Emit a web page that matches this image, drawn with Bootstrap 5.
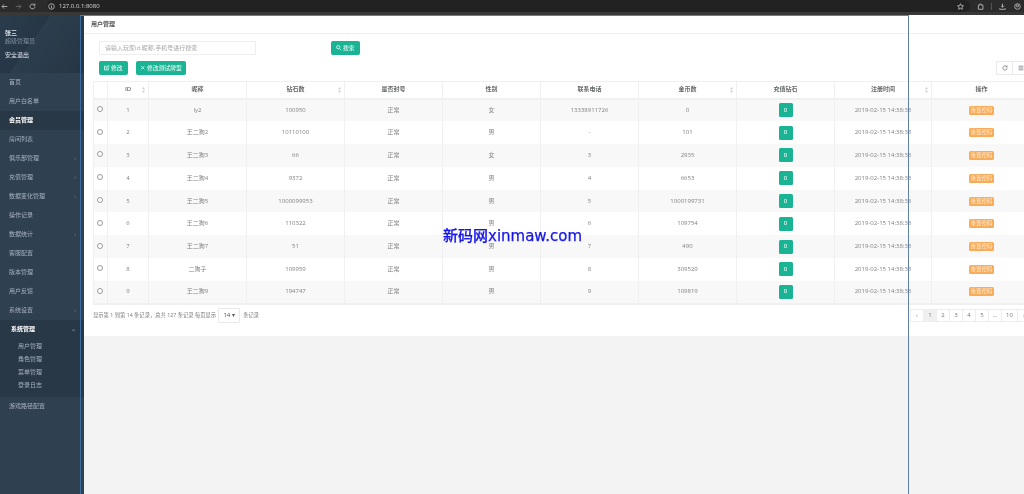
<!DOCTYPE html>
<html lang="zh">
<head>
<meta charset="utf-8">
<title>用户管理</title>
<link href="https://cdn.jsdelivr.net/npm/bootstrap@5.3.0/dist/css/bootstrap.min.css" rel="stylesheet">
<style>
html,body{height:494px;overflow:hidden}
body{width:1024px;font-family:"Open Sans","Liberation Sans","Noto Sans CJK SC",sans-serif;font-size:6px;color:#676a6c;background:#2f4050;position:relative}
.shot-blur{filter:blur(.4px)}
.chrome-bar{height:15px;background:#2b2b2b;border-bottom:3px solid #383838;color:#c4c7c5;flex:none}
.chrome-pill{height:12px;width:923px;margin-left:11px;border-radius:7px;background:#222;font-size:6px;color:#d8d8d8}
.chrome-bar svg{width:7px;height:7px;fill:none;stroke:#bdbdbd;stroke-width:1.200;flex:none}
.nav-back{margin-left:1px}
.nav-gap{margin-left:7px}
.pill-info{margin:0 4px 0 1px}
.pill-star{margin-left:auto;margin-right:6px}
.after-pill{margin-left:7px}
.after-sep{margin-left:8px}
.chrome-sep{width:1px;height:7px;background:#555;margin-left:7px}
.side-col{width:84px;flex:none;background:#2f4050}
.side-head{height:58px;padding:14px 5px 0;background:linear-gradient(125deg,#2b3d4d 0,#263646 40%,#2c3e4e 41%,#263544 100%);color:#dfe4ed;line-height:8px}
.side-head .role{color:#7f8ea3}
.side-head .quit{margin-top:6px;display:block}
.side-item{height:19px;line-height:19px;padding-left:9px;padding-right:8px;color:#a7b1c2;font-size:6px}
.side-item.on{background:#293846;color:#fff;font-weight:600}
.side-arrow{font-size:6px;color:#7c8796}
.side-group{background:#293846;height:77px}
.side-group>.side-item{color:#fff;padding-left:11px;font-weight:600}
.side-subs{padding-top:1px}
.side-sub{height:13px;line-height:13px;padding-left:18px;color:#a7b1c2}
.page-col{flex:1;min-width:0;background:#f3f3f4}
.panel-box{height:321px;background:#fff;overflow:hidden}
.panel-title{height:19px;border-bottom:1px solid #f0f0f0;padding-left:7px;line-height:18px;color:#555;font-weight:600}
.panel-body{padding:7px 0 0 15px}
.search-input{width:157px;height:14px;border:1px solid #eee;padding:0 5px;line-height:12px;color:#a5a5a5;background:#fff}
.mint-btn{background:#1ab394;color:#fff;border:1px solid #1ab394;border-radius:1.5px;height:14px;padding:0 4px;font-size:5.800px;line-height:12px;display:inline-flex;align-items:center;gap:1.5px}
.mint-tight{padding:0 3.500px}
.mint-btn svg{width:5.500px;height:5.500px;fill:none;stroke:#fff;stroke-width:1.400}
.tool-row{margin-top:6px;height:14px}
.tool-group{margin-left:auto;margin-right:-6px;width:34px;flex:none}
.tool-cell{width:17px;height:14px;border:1px solid #e7eaec;display:flex;align-items:center;justify-content:center;margin-right:-1px;flex:none}
.tool-cell svg{width:6px;height:6px;fill:none;stroke:#676a6c;stroke-width:1.200}
.grid-wrap{margin:6px 0 0 -6px;width:938px}
.data-grid{table-layout:fixed;border-collapse:collapse;width:938px;color:#808284}
.data-grid th{height:17px;border:1px solid #f0f0f0;border-bottom-width:2px;text-align:center;font-weight:600;color:#676a6c;padding:0;position:relative;background:#fff}
.data-grid td{height:22.800px;border:1px solid #f0f0f0;border-width:0 1px;text-align:center;padding:0;vertical-align:middle}
.data-grid tr:nth-child(odd) td{background:#f8f8f8}
.data-grid tr:nth-child(even) td{background:#fff}
.data-grid tbody{border-bottom:2px solid #f0f0f0}
.sort-mark{position:absolute;right:3px;top:5px;width:3px;height:6px;fill:#ccc}
.pick{width:6px;height:6px;border:.8px solid #999;border-radius:50%;display:block;margin:-2px 0 0 3px;background:#fff}
.gem-btn{display:inline-flex;width:14px;height:14px;background:#1ab394;color:#d8f5ec;border-radius:1.5px;align-items:center;justify-content:center;font-weight:600}
.reset-tag{display:inline-block;background:#f8ac59;color:#ffe9d0;height:9px;line-height:9px;width:25px;border-radius:1.5px;font-size:5.500px}
.foot-row{height:32px;margin-left:-6px;padding-top:3px;color:#777;font-size:5.300px;width:938px;align-items:flex-start}
.size-pick{height:15px;width:22px;border:1px solid #e7eaec;border-radius:1px;margin:0 3px 0 2px;line-height:13px;text-align:center;font-size:6px;color:#555}
.foot-text{line-height:15px}
.pager{margin-left:auto;height:13px;margin-top:1px;flex:none;width:120px}
.pager span{display:block;height:13px;line-height:11px;width:14px;text-align:center;border:1px solid #eee;margin-left:-1px;color:#777;font-size:6px;flex:none}
.pager span.on{background:#f0f0f0}
.pager span.wide{width:17px}
.window-edge{position:absolute;left:80px;top:15px;width:828.500px;height:479px;border:solid #5f7fa8;border-width:1px 1.500px 0 1px;border-left-color:#3b6a9c;pointer-events:none}
.mark-text{position:absolute;left:443px;top:226px;color:#1616e8;font-family:"DejaVu Sans","Noto Sans CJK SC",sans-serif;font-size:15px;line-height:20px;font-weight:500;white-space:nowrap;-webkit-text-stroke:.25px #1616e8}
</style>
</head>
<body class="d-flex flex-column">
<svg width="0" height="0" class="position-absolute">
  <symbol id="updown" viewBox="0 0 3 6"><path d="M1.5 0 3 2.3H0zM1.5 6 0 3.7h3z"/></symbol>
</svg>
<div class="shot-blur d-flex flex-column flex-grow-1">
<div class="chrome-bar d-flex align-items-center">
  <svg class="nav-back" viewBox="0 0 10 10"><path d="M9 5H1.5M4.5 2 1.5 5l3 3"/></svg>
  <svg class="nav-gap" viewBox="0 0 10 10" style="opacity:.45"><path d="M1 5h7.500M5.500 2l3 3-3 3"/></svg>
  <svg class="nav-gap" viewBox="0 0 10 10"><path d="M8.500 5A3.500 3.500 0 1 1 7.400 2.400M8.500 .8v2.400H6"/></svg>
  <div class="chrome-pill d-flex align-items-center">
    <svg class="pill-info" viewBox="0 0 10 10"><circle cx="5" cy="5" r="4"/><path d="M5 4.500V7.500M5 2.500v1"/></svg>
    <span>127.0.0.1:8080</span>
    <svg class="pill-star" viewBox="0 0 10 10"><path d="m5 1 1.200 2.700 3 .3-2.200 2 .6 3L5 7.500 2.400 9l.6-3L.8 4l3-.3z"/></svg>
  </div>
  <svg class="after-pill" viewBox="0 0 10 10"><path d="M2 3h2V1.500h2V3h2.500v6H2z"/></svg>
  <span class="chrome-sep"></span>
  <svg class="nav-gap" viewBox="0 0 10 10"><path d="M5 1v5M3 4l2 2 2-2M1 7.500v1.500h8V7.500"/></svg>
  <svg class="after-sep" viewBox="0 0 10 10"><circle cx="5" cy="5" r="4"/><circle cx="5" cy="4" r="1.500"/></svg>
</div>
<div class="d-flex flex-grow-1">
  <aside class="side-col">
    <div class="side-head"><div class="fw-semibold">张三</div><div class="role">超级管理员</div><span class="quit">安全退出</span></div>
    <div class="side-item">首页</div>
    <div class="side-item">用户白名单</div>
    <div class="side-item on">会员管理</div>
    <div class="side-item">房间列表</div>
    <div class="side-item d-flex justify-content-between">俱乐部管理<span class="side-arrow">‹</span></div>
    <div class="side-item d-flex justify-content-between">充值管理<span class="side-arrow">‹</span></div>
    <div class="side-item d-flex justify-content-between">数据变化管理<span class="side-arrow">‹</span></div>
    <div class="side-item">操作记录</div>
    <div class="side-item d-flex justify-content-between">数据统计<span class="side-arrow">‹</span></div>
    <div class="side-item">客服配置</div>
    <div class="side-item">版本管理</div>
    <div class="side-item">用户反馈</div>
    <div class="side-item d-flex justify-content-between">系统设置<span class="side-arrow">‹</span></div>
    <div class="side-group">
      <div class="side-item d-flex justify-content-between">系统管理<span class="side-arrow">⌄</span></div>
      <div class="side-subs">
        <div class="side-sub">用户管理</div>
        <div class="side-sub">角色管理</div>
        <div class="side-sub">菜单管理</div>
        <div class="side-sub">登录日志</div>
      </div>
    </div>
    <div class="side-item">游戏路径配置</div>
  </aside>
  <main class="page-col">
    <div class="panel-box">
      <div class="panel-title">用户管理</div>
      <div class="panel-body">
        <div class="d-flex">
          <div class="search-input">请输入玩家id,昵称,手机号进行搜索</div>
          <button class="mint-btn" style="margin-left:75px"><svg viewBox="0 0 10 10"><circle cx="4" cy="4" r="3"/><path d="m6.500 6.500 3 3"/></svg>搜索</button>
        </div>
        <div class="tool-row d-flex">
          <button class="mint-btn"><svg viewBox="0 0 10 10"><path d="M8 6v3H1V2h3M4 6l.5-2L8 .8l1.500 1.500L6 5.500z"/></svg>修改</button>
          <button class="mint-btn mint-tight" style="margin-left:8px"><svg viewBox="0 0 10 10"><path d="m2 2 6 6M8 2 2 8"/></svg>修改测试牌型</button>
          <div class="tool-group d-flex">
            <div class="tool-cell"><svg viewBox="0 0 10 10"><path d="M8.500 5A3.500 3.500 0 1 1 7.400 2.400M8.500 .8v2.400H6"/></svg></div>
            <div class="tool-cell"><svg viewBox="0 0 10 10"><path d="M1 2h8M1 5h8M1 8h8"/></svg></div>
          </div>
        </div>
        <div class="grid-wrap">
          <table class="data-grid">
            <colgroup><col style="width:14px"><col style="width:41px"><col style="width:98px"><col style="width:98px"><col style="width:98px"><col style="width:98px"><col style="width:98px"><col style="width:98px"><col style="width:98px"><col style="width:97px"><col style="width:100px"></colgroup>
            <thead><tr>
              <th></th>
              <th>ID<svg class="sort-mark"><use href="#updown"/></svg></th>
              <th>昵称</th>
              <th>钻石数<svg class="sort-mark"><use href="#updown"/></svg></th>
              <th>是否封号</th><th>性别</th><th>联系电话</th>
              <th>金币数<svg class="sort-mark"><use href="#updown"/></svg></th>
              <th>充值钻石</th>
              <th>注册时间<svg class="sort-mark"><use href="#updown"/></svg></th>
              <th>操作</th>
            </tr></thead>
            <tbody>
              <tr><td><i class="pick"></i></td><td>1</td><td>ly2</td><td>100950</td><td>正常</td><td>女</td><td>13338911726</td><td>0</td><td><span class="gem-btn">0</span></td><td>2019-02-15 14:38:33</td><td><span class="reset-tag">重置密码</span></td></tr>
              <tr><td><i class="pick"></i></td><td>2</td><td>王二狗2</td><td>10110100</td><td>正常</td><td>男</td><td>-</td><td>101</td><td><span class="gem-btn">0</span></td><td>2019-02-15 14:38:33</td><td><span class="reset-tag">重置密码</span></td></tr>
              <tr><td><i class="pick"></i></td><td>3</td><td>王二狗3</td><td>66</td><td>正常</td><td>女</td><td>3</td><td>2935</td><td><span class="gem-btn">0</span></td><td>2019-02-15 14:38:33</td><td><span class="reset-tag">重置密码</span></td></tr>
              <tr><td><i class="pick"></i></td><td>4</td><td>王二狗4</td><td>9372</td><td>正常</td><td>男</td><td>4</td><td>6653</td><td><span class="gem-btn">0</span></td><td>2019-02-15 14:38:33</td><td><span class="reset-tag">重置密码</span></td></tr>
              <tr><td><i class="pick"></i></td><td>5</td><td>王二狗5</td><td>1000099953</td><td>正常</td><td>男</td><td>5</td><td>1000199731</td><td><span class="gem-btn">0</span></td><td>2019-02-15 14:38:33</td><td><span class="reset-tag">重置密码</span></td></tr>
              <tr><td><i class="pick"></i></td><td>6</td><td>王二狗6</td><td>110322</td><td>正常</td><td>男</td><td>6</td><td>109754</td><td><span class="gem-btn">0</span></td><td>2019-02-15 14:38:33</td><td><span class="reset-tag">重置密码</span></td></tr>
              <tr><td><i class="pick"></i></td><td>7</td><td>王二狗7</td><td>51</td><td>正常</td><td>男</td><td>7</td><td>490</td><td><span class="gem-btn">0</span></td><td>2019-02-15 14:38:33</td><td><span class="reset-tag">重置密码</span></td></tr>
              <tr><td><i class="pick"></i></td><td>8</td><td>二狗子</td><td>109959</td><td>正常</td><td>男</td><td>8</td><td>309529</td><td><span class="gem-btn">0</span></td><td>2019-02-15 14:38:33</td><td><span class="reset-tag">重置密码</span></td></tr>
              <tr><td><i class="pick"></i></td><td>9</td><td>王二狗9</td><td>194747</td><td>正常</td><td>男</td><td>9</td><td>109819</td><td><span class="gem-btn">0</span></td><td>2019-02-15 14:38:33</td><td><span class="reset-tag">重置密码</span></td></tr>
            </tbody>
          </table>
        </div>
        <div class="foot-row d-flex">
          <span class="foot-text">显示第 1 到第 14 条记录，总共 127 条记录 每页显示</span>
          <div class="size-pick">14 ▾</div>
          <span class="foot-text">条记录</span>
          <div class="pager d-flex"><span>‹</span><span class="on">1</span><span>2</span><span>3</span><span>4</span><span>5</span><span>...</span><span class="wide">10</span><span>›</span></div>
        </div>
      </div>
    </div>
  </main>
</div>
<div class="window-edge"></div>
<div class="mark-text">新码网xinmaw.com</div>
</div>
</body>
</html>
